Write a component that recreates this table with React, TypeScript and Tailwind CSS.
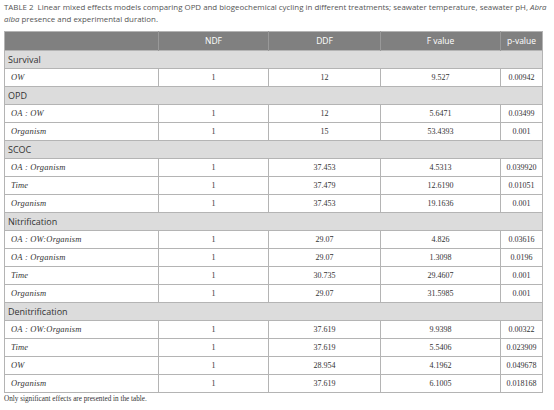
import React from 'react';

type Row = { term: string; ndf: string; ddf: string; f: string; p: string };

interface Section {
  name: string;
  rows: Row[];
}

const sections: Section[] = [
  { name: 'Survival', rows: [{ term: 'OW', ndf: '1', ddf: '12', f: '9.527', p: '0.00942' }] },
  {
    name: 'OPD',
    rows: [
      { term: 'OA : OW', ndf: '1', ddf: '12', f: '5.6471', p: '0.03499' },
      { term: 'Organism', ndf: '1', ddf: '15', f: '53.4393', p: '0.001' },
    ],
  },
  {
    name: 'SCOC',
    rows: [
      { term: 'OA : Organism', ndf: '1', ddf: '37.453', f: '4.5313', p: '0.039920' },
      { term: 'Time', ndf: '1', ddf: '37.479', f: '12.6190', p: '0.01051' },
      { term: 'Organism', ndf: '1', ddf: '37.453', f: '19.1636', p: '0.001' },
    ],
  },
  {
    name: 'Nitrification',
    rows: [
      { term: 'OA : OW:Organism', ndf: '1', ddf: '29.07', f: '4.826', p: '0.03616' },
      { term: 'OA : Organism', ndf: '1', ddf: '29.07', f: '1.3098', p: '0.0196' },
      { term: 'Time', ndf: '1', ddf: '30.735', f: '29.4607', p: '0.001' },
      { term: 'Organism', ndf: '1', ddf: '29.07', f: '31.5985', p: '0.001' },
    ],
  },
  {
    name: 'Denitrification',
    rows: [
      { term: 'OA : OW:Organism', ndf: '1', ddf: '37.619', f: '9.9398', p: '0.00322' },
      { term: 'Time', ndf: '1', ddf: '37.619', f: '5.5406', p: '0.023909' },
      { term: 'OW', ndf: '1', ddf: '28.954', f: '4.1962', p: '0.049678' },
      { term: 'Organism', ndf: '1', ddf: '37.619', f: '6.1005', p: '0.018168' },
    ],
  },
];

const sans = { fontFamily: '"Open Sans", "Noto Sans", sans-serif' };
const serif = { fontFamily: '"Liberation Serif", serif' };

const App: React.FC = () => {
  return (
    <div className="w-[554px] h-[410px] overflow-hidden bg-white">
      <p className="px-[4px] pt-[1px] text-[7.9px] leading-[12px] text-[#555] whitespace-nowrap" style={sans}>
        TABLE 2&nbsp; Linear mixed effects models comparing OPD and biogeochemical cycling in different treatments; seawater
        temperature, seawater pH, <i>Abra</i>
        <br />
        <i>alba</i> presence and experimental duration.
      </p>
      <table className="ml-[4px] mt-[6px] w-[538px] border-collapse table-fixed border-[1.5px] border-[#b4b4b4]">
        <colgroup>
          <col className="w-[154px]" />
          <col className="w-[110px]" />
          <col className="w-[112px]" />
          <col className="w-[120px]" />
          <col className="w-[42px]" />
        </colgroup>
        <thead>
          <tr className="bg-[#808080] text-white text-[8.5px]" style={sans}>
            <th className="h-[19px] p-0 font-normal border-r border-[#999]"></th>
            <th className="h-[19px] p-0 font-normal border-r border-[#999]">NDF</th>
            <th className="h-[19px] p-0 font-normal border-r border-[#999]">DDF</th>
            <th className="h-[19px] p-0 font-normal border-r border-[#999]">F value</th>
            <th className="h-[19px] p-0 font-normal">p-value</th>
          </tr>
        </thead>
        <tbody>
          {sections.map((s) => (
            <React.Fragment key={s.name}>
              <tr className="bg-[#dcdcdc]">
                <td colSpan={5} className="h-[18px] p-0 pl-[3px] text-[9px] text-[#333] border-y border-[#b4b4b4]" style={sans}>
                  {s.name}
                </td>
              </tr>
              {s.rows.map((r, i) => (
                <tr key={i} className="text-[8px] text-[#333]" style={serif}>
                  <td className="h-[18px] p-0 pl-[6px] text-[8.5px] italic tracking-[0.2px] border border-[#b4b4b4]">{r.term}</td>
                  <td className="h-[18px] p-0 text-center border border-[#b4b4b4]">{r.ndf}</td>
                  <td className="h-[18px] p-0 text-center border border-[#b4b4b4]">{r.ddf}</td>
                  <td className="h-[18px] p-0 text-center border border-[#b4b4b4]">{r.f}</td>
                  <td className="h-[18px] p-0 text-center border border-[#b4b4b4]">{r.p}</td>
                </tr>
              ))}
            </React.Fragment>
          ))}
        </tbody>
      </table>
      <p className="px-[4px] pt-[1px] text-[7.2px] text-[#333]" style={serif}>
        Only significant effects are presented in the table.
      </p>
    </div>
  );
};

export default App;
